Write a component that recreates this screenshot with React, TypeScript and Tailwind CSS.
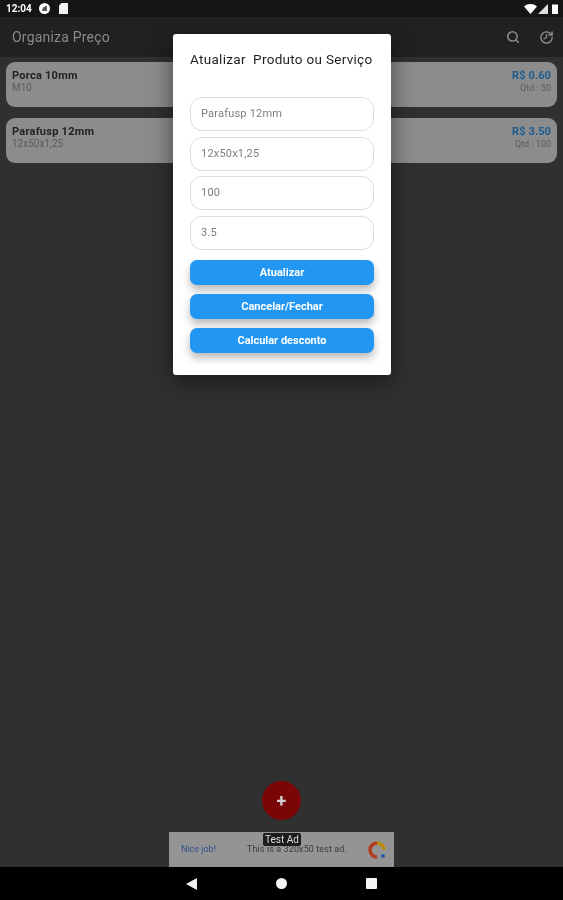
import { Search, History } from "lucide-react";

const font = { fontFamily: "Roboto, 'Liberation Sans', sans-serif" };

function Field({ value }: { value: string }) {
  return (
    <div className="h-[34px] rounded-[12px] border-[1.5px] border-[#dcdcdc] bg-white pl-[10px] pt-[1px] flex items-center text-[11px] text-[#7d7d7d] tracking-[0.2px]">
      {value}
    </div>
  );
}

function ActionButton({ label }: { label: string }) {
  return (
    <div className="h-[25px] rounded-[7px] bg-[#2196f3] flex items-center justify-center pt-[1px] text-[11px] font-bold text-white shadow-[0_5px_8px_rgba(0,0,0,0.28)]">
      {label}
    </div>
  );
}

function Card({ name, sub, price, qty }: { name: string; sub: string; price: string; qty: string }) {
  return (
    <div className="h-[45px] rounded-[9px] bg-[#8c8c8c] px-[6px] pt-[7px] flex justify-between">
      <div>
        <div className="text-[11px] leading-[13px] font-bold text-[#222222] tracking-[0.25px]">{name}</div>
        <div className="text-[10px] leading-[12px] text-[#5c5c5c]">{sub}</div>
      </div>
      <div className="text-right">
        <div className="text-[11px] leading-[13px] font-bold text-[#1d5c91] tracking-[0.1px]">{price}</div>
        <div className="text-[9px] leading-[12px] text-[#5c5c5c]">{qty}</div>
      </div>
    </div>
  );
}

export default function App() {
  return (
    <div className="relative w-[563px] h-[900px] overflow-hidden bg-[#303030] flex flex-col blur-[0.5px]" style={font}>
      <div className="h-[17px] bg-[#151515] flex items-center justify-between pl-[6px] pr-[4px]">
        <div className="flex items-center gap-[7px]">
          <span className="text-[10px] font-bold text-white">12:04</span>
          <div className="w-[11px] h-[11px] rounded-full bg-white flex items-center justify-center">
            <div className="w-[5px] h-[5px] rounded-tl-full bg-[#555555]" />
          </div>
          <svg width="9" height="11" viewBox="0 0 9 11" className="ml-[2px]">
            <path d="M2.5 0H9V11H0V2.5Z" fill="#f2f2f2" />
          </svg>
        </div>
        <div className="flex items-center gap-[1px]">
          <svg width="13" height="10" viewBox="0 0 13 10">
            <path d="M0 2.5C3.5-.8 9.5-.8 13 2.5L6.5 10Z" fill="#fff" />
          </svg>
          <svg width="10" height="10" viewBox="0 0 10 10">
            <path d="M10 0V10H0Z" fill="#e0e0e0" />
          </svg>
          <svg width="8" height="11" viewBox="0 0 8 11" className="ml-[2px]">
            <path d="M1 1.5H7V11H1Z" fill="#fff" />
          </svg>
        </div>
      </div>

      <div className="h-[40px] bg-[#212121] flex items-center justify-between pl-[12px] pr-[9px]">
        <span className="text-[14px] text-[#8a8a8a] tracking-[0.2px]">Organiza Preço</span>
        <div className="flex items-center gap-[19px] text-[#8f8f8f]">
          <Search size={14} strokeWidth={2.6} />
          <History size={15} strokeWidth={2.2} className="-scale-x-100" />
        </div>
      </div>

      <div className="flex-1 flex flex-col gap-[11px] px-[6px] pt-[5px]">
        <Card name="Porca 10mm" sub="M10" price="R$ 0.60" qty="Qtd : 50" />
        <Card name="Parafusp 12mm" sub="12x50x1,25" price="R$ 3.50" qty="Qtd : 100" />
      </div>

      <div className="h-[35px] flex justify-center">
        <div className="w-[225px] bg-[#949494] pl-[12px] pr-[7px] flex items-center justify-between">
          <span className="text-[9px] text-[#33508a]">Nice job!</span>
          <span className="text-[9px] text-[#3c3c3c] tracking-[0.1px] ml-[11px]">This is a 320x50 test ad.</span>
          <svg width="20" height="20" viewBox="0 0 20 20">
            <path d="M10 3a7 7 0 1 0 0 14" fill="none" stroke="#b23a1e" strokeWidth="3.4" />
            <path d="M10 3a7 7 0 0 1 7 7" fill="none" stroke="#b58a10" strokeWidth="3.4" />
            <circle cx="16" cy="16" r="2" fill="#2a5aa8" />
          </svg>
        </div>
      </div>

      <div className="h-[33px] bg-black flex items-center justify-center gap-[79px]">
        <svg width="11" height="12" viewBox="0 0 11 12">
          <path d="M11 0V12L0 6Z" fill="#f0f0f0" />
        </svg>
        <div className="w-[11px] h-[11px] rounded-full bg-[#f5f5f5]" />
        <div className="w-[11px] h-[11px] rounded-[1px] bg-[#f5f5f5]" />
      </div>

      <div className="absolute left-[262px] top-[781px] w-[39px] h-[39px] rounded-full bg-[#7b0606] flex items-center justify-center text-[#cfcfcf] text-[18px] font-bold leading-none">
        +
      </div>
      <div className="absolute left-[263px] top-[833px] w-[38px] h-[13px] rounded-[2px] bg-[#1c1c1c] text-[#dddddd] text-[10px] leading-[13px] text-center">
        Test Ad
      </div>

      <div className="absolute left-[173px] top-[34px] w-[218px] h-[341px] bg-white rounded-[3px] px-[17px] shadow-[0_6px_24px_rgba(0,0,0,0.5)]">
        <div className="h-[63px] pt-[17px] text-[13.5px] leading-[16px] text-[#1f1f1f] tracking-[0.3px] whitespace-pre">
          Atualizar  Produto ou Serviço
        </div>
        <div className="flex flex-col gap-[5.6px]">
          <Field value="Parafusp 12mm" />
          <Field value="12x50x1,25" />
          <Field value="100" />
          <Field value="3.5" />
        </div>
        <div className="flex flex-col gap-[9px] mt-[10px]">
          <ActionButton label="Atualizar" />
          <ActionButton label="Cancelar/Fechar" />
          <ActionButton label="Calcular desconto" />
        </div>
      </div>
    </div>
  );
}
